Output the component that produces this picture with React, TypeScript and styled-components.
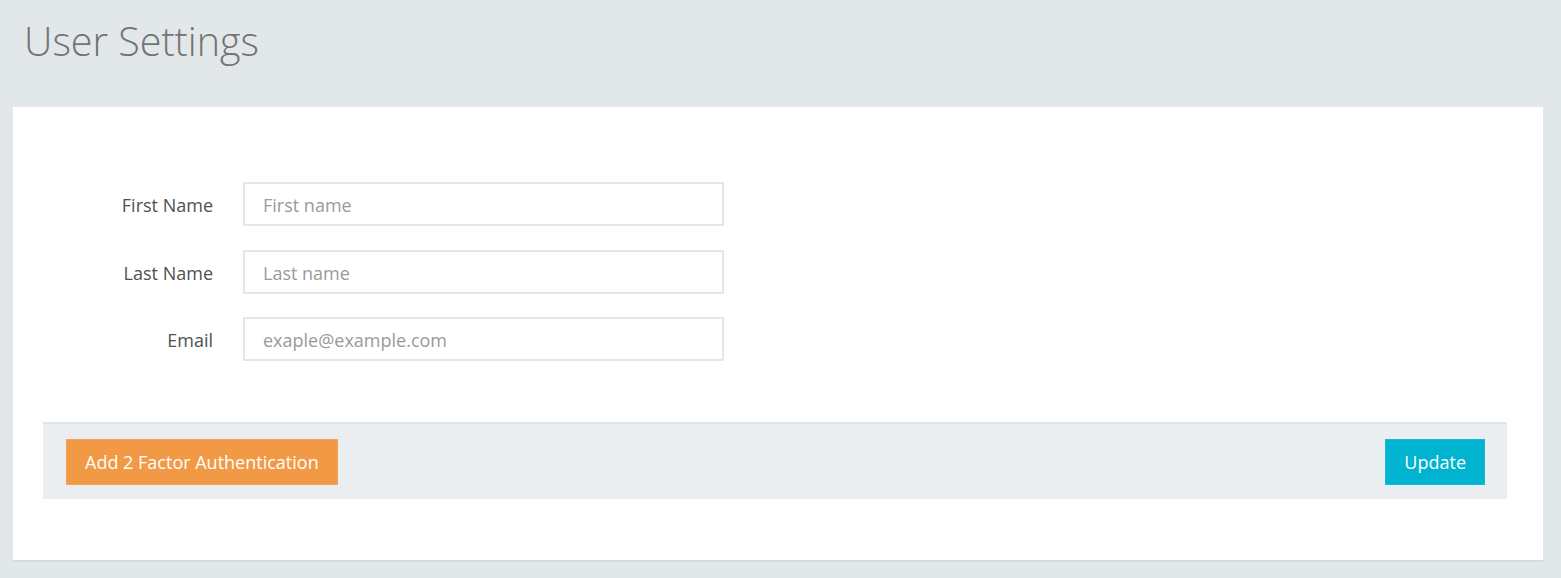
import React from 'react';
import styled, { createGlobalStyle } from 'styled-components';

const GlobalStyle = createGlobalStyle`
  html, body {
    margin: 0;
    padding: 0;
    background: #e2e7ea;
    font-family: 'Open Sans', 'Liberation Sans', sans-serif;
  }
  * { box-sizing: border-box; }
`;

const Page = styled.div`
  min-height: 578px;
  padding: 0 18px 0 13px;
`;

const Header = styled.div`
  height: 107px;
  padding: 14px 0 0 11px;
`;

const Title = styled.h1`
  margin: 0;
  font-weight: 300;
  font-size: 39.5px;
  line-height: 54px;
  color: #737373;
`;

const Panel = styled.div`
  background: #fff;
  padding: 75px 36px 61px 30px;
  box-shadow: 0 2px 0 #d5dadd;
`;

const Form = styled.form`
  display: flex;
  flex-direction: column;
  gap: 23.5px;
  margin-bottom: 61px;
`;

const Row = styled.div`
  display: grid;
  grid-template-columns: 170px 481px;
  column-gap: 30px;
  align-items: center;
`;

const Label = styled.label`
  text-align: right;
  font-size: 18px;
  line-height: 26px;
  padding-top: 2px;
  color: #505050;
`;

const Input = styled.input`
  height: 44px;
  border: 2px solid #e6e6e6;
  padding: 2px 18px 0;
  font-family: inherit;
  font-size: 18px;
  color: #444;
  outline: none;

  &::placeholder {
    color: #9a9a9a;
  }
`;

const Footer = styled.div`
  display: flex;
  justify-content: space-between;
  align-items: center;
  background: #eaeef1;
  border-top: 2px solid #e1e5e8;
  padding: 15px 22px 14px 23px;
`;

const Button = styled.button<{ $color: string; $border: string }>`
  height: 46px;
  padding: 0 18px;
  border: 1px solid ${p => p.$border};
  background: ${p => p.$color};
  color: #fff;
  font-family: inherit;
  font-size: 18px;
  cursor: pointer;
`;

const fields = [
  { label: 'First Name', placeholder: 'First name', type: 'text' },
  { label: 'Last Name', placeholder: 'Last name', type: 'text' },
  { label: 'Email', placeholder: 'exaple@example.com', type: 'email' },
];

const App: React.FC = () => {
  return (
    <Page>
      <GlobalStyle />
      <Header>
        <Title>User Settings</Title>
      </Header>
      <Panel>
        <Form onSubmit={e => e.preventDefault()}>
          {fields.map(f => (
            <Row key={f.label}>
              <Label>{f.label}</Label>
              <Input type={f.type} placeholder={f.placeholder} />
            </Row>
          ))}
        </Form>
        <Footer>
          <Button $color="#f29946" $border="#f4a25a">Add 2 Factor Authentication</Button>
          <Button $color="#00b4d1" $border="#14bcd6">Update</Button>
        </Footer>
      </Panel>
    </Page>
  );
};

export default App;
